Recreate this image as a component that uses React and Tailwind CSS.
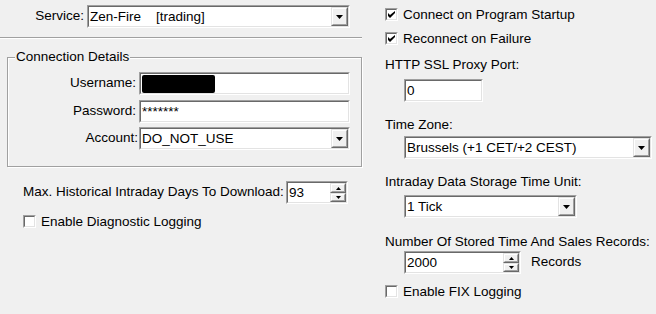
import React from "react";

const Arrow = () => (
  <svg width="7" height="4" viewBox="0 0 7 4">
    <polygon points="0,0 7,0 3.5,4" fill="#000" />
  </svg>
);

const Sunken = ({ className, children }) => (
  <div className={`border border-t-[#a0a0a0] border-l-[#a0a0a0] border-r-white border-b-white ${className}`}>
    <div className="h-full w-full border border-t-[#696969] border-l-[#696969] border-r-[#e3e3e3] border-b-[#e3e3e3] bg-white flex items-stretch">
      {children}
    </div>
  </div>
);

const Raised = ({ className, children }) => (
  <div className={`border border-t-[#e3e3e3] border-l-[#e3e3e3] border-r-[#696969] border-b-[#696969] bg-[#f0f0f0] ${className}`}>
    <div className="h-full w-full border border-t-white border-l-white border-r-[#a0a0a0] border-b-[#a0a0a0] flex items-center justify-center">
      {children}
    </div>
  </div>
);

const TextBox = ({ value, className }) => (
  <Sunken className={`h-[23px] ${className}`}>
    <span className="pl-[1px] leading-[19px] whitespace-pre">{value}</span>
  </Sunken>
);

const Combo = ({ value, className }) => (
  <Sunken className={`h-[23px] ${className}`}>
    <span className="flex-1 pl-[1px] leading-[19px] whitespace-pre">{value}</span>
    <Raised className="w-[17px] h-[19px]">
      <Arrow />
    </Raised>
  </Sunken>
);

const Spin = ({ value, className }) => (
  <Sunken className={`h-[23px] ${className}`}>
    <span className="flex-1 pl-[1px] leading-[19px]">{value}</span>
    <div className="w-[16px] flex flex-col">
      <Raised className="h-[10px]">
        <svg width="5" height="3" viewBox="0 0 5 3">
          <polygon points="2.5,0 5,3 0,3" fill="#000" />
        </svg>
      </Raised>
      <Raised className="h-[9px]">
        <svg width="5" height="3" viewBox="0 0 5 3">
          <polygon points="0,0 5,0 2.5,3" fill="#000" />
        </svg>
      </Raised>
    </div>
  </Sunken>
);

const CheckBox = ({ checked, label, className }) => (
  <div className={`flex items-center h-[13px] ${className}`}>
    <div className="w-[13px] h-[13px] border border-t-[#a0a0a0] border-l-[#a0a0a0] border-r-white border-b-white">
      <div className="w-full h-full border border-t-[#696969] border-l-[#696969] border-r-[#e3e3e3] border-b-[#e3e3e3] bg-white flex items-center justify-center">
        {checked && (
          <svg width="7" height="7" viewBox="0 0 7 7">
            <polygon points="0,2 0,5 2,7 7,2 7,0 2,4" fill="#000" />
          </svg>
        )}
      </div>
    </div>
    <span className="ml-[5px] leading-[15px] whitespace-nowrap">{label}</span>
  </div>
);

export default function App() {
  return (
    <div className="w-[656px] h-[314px] bg-[#f0f0f0] flex text-[13.5px] text-black font-['Liberation_Sans',Arial,sans-serif]">
      {/* left */}
      <div className="w-[365px] flex flex-col">
        <div className="mt-[5px] flex items-center">
          <span className="w-[84px] text-right">Service:</span>
          <Combo value="Zen-Fire    [trading]" className="ml-[3px] w-[263px]" />
        </div>

        <div className="mt-[9px] w-[362px] border-t border-t-[#a0a0a0] border-b border-b-white" />

        <div className="relative mt-[18px] ml-[7px] w-[355px] h-[110px] border border-[#a0a0a0] shadow-[1px_1px_0_#fff,inset_1px_1px_0_#fff] pt-[14px]">
          <span className="absolute left-[7px] top-[-9px] px-[1px] bg-[#f0f0f0] leading-[15px]">Connection Details</span>
          <div className="flex items-center">
            <span className="w-[131px] pr-[3px] text-right">Username:</span>
            <Sunken className="h-[23px] w-[211px]">
              <div className="ml-[1px] mt-[1px] w-[73px] h-[18px] bg-black rounded-[2px]" />
            </Sunken>
          </div>
          <div className="mt-[5px] flex items-center">
            <span className="w-[131px] pr-[3px] text-right">Password:</span>
            <TextBox value="*******" className="w-[211px]" />
          </div>
          <div className="mt-[4px] flex items-center">
            <span className="w-[131px] pr-[1px] text-right">Account:</span>
            <Combo value="DO_NOT_USE" className="w-[211px]" />
          </div>
        </div>

        <div className="mt-[14px] ml-[23px] flex items-center">
          <span className="w-[263px] whitespace-nowrap">Max. Historical Intraday Days To Download:</span>
          <Spin value="93" className="w-[62px]" />
        </div>

        <CheckBox label="Enable Diagnostic Logging" className="mt-[11px] ml-[23px]" />
      </div>

      {/* right */}
      <div className="flex-1 flex flex-col pl-[20px]">
        <CheckBox checked label="Connect on Program Startup" className="mt-[8px]" />
        <CheckBox checked label="Reconnect on Failure" className="mt-[11px]" />

        <span className="mt-[12px] leading-[15px]">HTTP SSL Proxy Port:</span>
        <TextBox value="0" className="mt-[7px] ml-[19px] w-[79px]" />

        <span className="mt-[15px] leading-[15px]">Time Zone:</span>
        <Combo value="Brussels (+1 CET/+2 CEST)" className="mt-[4px] ml-[19px] w-[248px]" />

        <span className="mt-[15px] leading-[15px]">Intraday Data Storage Time Unit:</span>
        <Combo value="1 Tick" className="mt-[6px] ml-[19px] w-[173px]" />

        <span className="mt-[16px] leading-[15px] whitespace-nowrap">Number Of Stored Time And Sales Records:</span>
        <div className="mt-[2px] ml-[19px] flex items-center">
          <Spin value="2000" className="w-[117px]" />
          <span className="ml-[10px]">Records</span>
        </div>

        <CheckBox label="Enable FIX Logging" className="mt-[11px]" />
      </div>
    </div>
  );
}
